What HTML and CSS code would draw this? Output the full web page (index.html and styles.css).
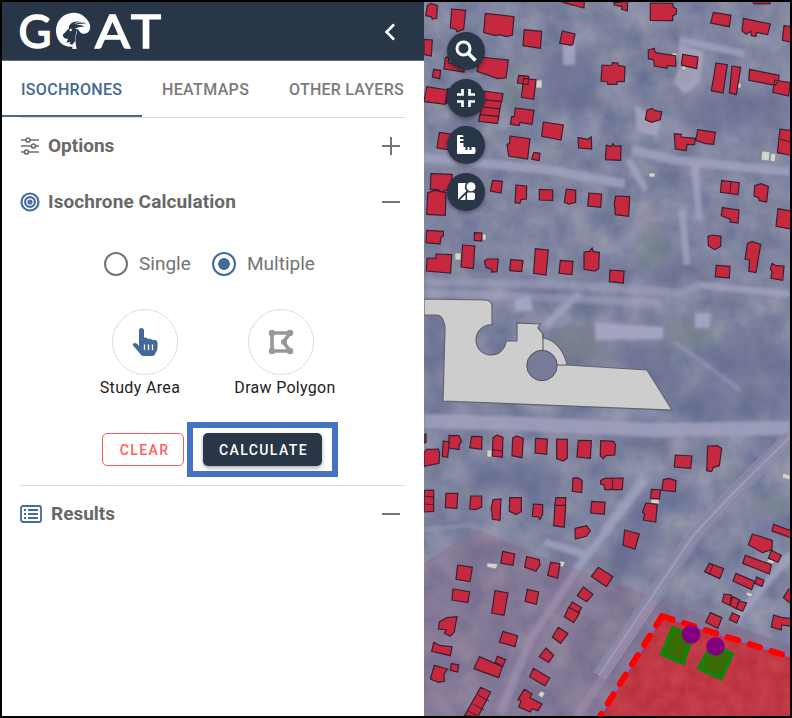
FILE: index.html
```html
<!DOCTYPE html>
<html lang="en">
<head>
<meta charset="utf-8">
<title>GOAT</title>
<link rel="stylesheet" href="styles.css">
</head>
<body>
<div class="app">
  <aside class="panel">
    <header class="header">
      <svg class="logo" width="160" height="58" viewBox="12 2 160 58" role="img" aria-label="GOAT">
        <g class="logo-text"><text x="18.500" y="48.200" textLength="33" lengthAdjust="spacingAndGlyphs">G</text><text x="95" y="48.200" textLength="35" lengthAdjust="spacingAndGlyphs">A</text><text x="131" y="48.200" textLength="30" lengthAdjust="spacingAndGlyphs">T</text></g>
        <g transform="translate(50 8) scale(.33333)">
          <path fill="#fff" d="M70 14C91 13 107 26 117 43C131 70 103 87 90 72C85 64 81 60 76 63C81 66 82 71 79 79C75 91 76 108 80 122Q70 124 65 121L69 116C38 119 18 97 18 68C18 37 41 15 70 14Z"/>
          <path fill="#293647" d="M38 81L57 61Q55 53 62 47Q74 36 100 43L112 49Q90 44 77 51Q94 49 104 57Q90 54 76 61L80 67Q75 87 76 98L67 110L58 107L62 101L49 104L54 93L42 90Z"/>
          <path d="M74 46Q90 39 109 47" fill="none" stroke="#fff" stroke-width="2"/><circle cx="62" cy="66" r="3.500" fill="#fff"/>
        </g>
      </svg>
      <svg class="back" width="14" height="20" viewBox="0 0 14 20"><path d="M11 2.500L3.500 10L11 17.500" fill="none" stroke="#fff" stroke-width="2.500"/></svg>
    </header>
    <nav class="tabs"><span class="tab active">ISOCHRONES</span><span class="tab heat">HEATMAPS</span><span class="tab other">OTHER LAYERS</span></nav>
    <section class="section options">
      <svg width="20" height="20" viewBox="0 0 20 20" fill="#fff" stroke="#707070" stroke-width="1.700"><path d="M1 4H19M1 10H19M1 16H19"/><circle cx="8" cy="4" r="2"/><circle cx="13.500" cy="10" r="2"/><circle cx="6.500" cy="16" r="2"/></svg>
      <h2>Options</h2><span class="toggle plus"></span>
    </section>
    <section class="section calculation">
      <svg width="20" height="20" viewBox="0 0 20 20" fill="none" stroke="#446ba2" stroke-width="2.200"><circle cx="10" cy="10" r="8.500"/><circle cx="10" cy="10" r="4.900"/><circle cx="10" cy="10" r="1.500"/></svg>
      <h2 class="t-calc">Isochrone Calculation</h2><span class="toggle"></span>
    </section>
    <div class="radios"><i class="radio"></i><span class="t-single">Single</span><i class="radio selected"></i><span>Multiple</span></div>
    <div class="methods">
      <div class="method"><div class="circle">
        <svg class="hand" width="26" height="30" viewBox="0 0 26 30"><path fill="#446996" d="M7 16V3.500Q7 1 9.500 1T12 3.500V10.500Q15 10 16 12Q19 11 20 13Q25 12 25.500 16V21Q25 24 23.500 26Q23 29 20 29H11Q9 29 7.500 26L1 18.500Q.3 16 3 16Q5 16 7 19Z"/><path d="M12.500 17.500V23M16.500 17.500V23M20.500 17.500V23" stroke="#fff" stroke-width="1.300"/></svg>
      </div><span>Study Area</span></div>
      <div class="method wide"><div class="circle">
        <svg width="26" height="26" viewBox="0 0 26 26"><path d="M4 4H22L15.500 13L22 22H4Z" fill="none" stroke="#989898" stroke-width="3.600"/><g fill="#989898"><circle cx="4" cy="4" r="3.200"/><circle cx="22" cy="4" r="3.200"/><circle cx="16" cy="13" r="3"/><circle cx="22" cy="22" r="3.200"/><circle cx="4" cy="22" r="3.200"/></g></svg>
      </div><span>Draw Polygon</span></div>
    </div>
    <div class="actions"><button class="clear">CLEAR</button><div class="highlight"><button class="calculate">CALCULATE</button></div></div>
    <section class="section results">
      <svg width="22" height="18" viewBox="0 0 22 18" fill="none" stroke="#446ba2" stroke-width="1.800"><rect x="1" y="1" width="20" height="16" rx="2"/><path d="M8 5H18M8 9H18M8 13H18M4 5H6M4 9H6M4 13H6"/></svg>
      <h2>Results</h2><span class="toggle"></span>
    </section>
  </aside>
  <main class="map">
    <svg class="canvas" width="366" height="714" viewBox="424 2 366 714">
      <defs>
        <filter id="terrain" x="0" y="0" width="100%" height="100%" color-interpolation-filters="sRGB"><feTurbulence type="fractalNoise" baseFrequency=".035" numOctaves="5" seed="12"/><feColorMatrix values=".24 0 0 0 .38 .2 0 0 0 .42 .13 .05 0 0 .535 0 0 0 0 1"/></filter>
        <filter id="redgrain" x="0" y="0" width="100%" height="100%" color-interpolation-filters="sRGB"><feTurbulence type="fractalNoise" baseFrequency=".07" numOctaves="3" seed="4"/><feColorMatrix values=".1 0 0 0 .7 .1 0 0 0 .17 .1 0 0 0 .22 0 0 0 0 1"/></filter>
        <filter id="soft"><feGaussianBlur stdDeviation="1.500"/></filter>
        <filter id="wide"><feGaussianBlur stdDeviation="6"/></filter>
        <clipPath id="zone"><path d="M662 616L792 657V718H599Z"/></clipPath>
      </defs>
      <rect x="424" y="2" width="366" height="714" fill="#777b9b" filter="url(#terrain)"/>
      <g filter="url(#wide)" opacity=".45">
        <path fill="#62668e" d="M540 60L590 50L600 110L550 115ZM690 92L790 100V130L680 125ZM640 250L690 250L680 285L640 280ZM610 345L665 345L690 390L720 340H790V416H680L640 370H610ZM424 310H442V400H424ZM475 470H560V495H475ZM640 500L680 470L640 580L600 570Z"/>
        <path fill="#758481" d="M640 230H665V270H640ZM550 330H600V360H550ZM670 320H715V350H670ZM755 495H790V515H755ZM500 65H520V110H500Z"/>
      </g>
      <g filter="url(#soft)" opacity=".8">
        <g fill="none" stroke="#a2a2bf">
          <path stroke-width="9" d="M424 158L490 164L550 170L625 184M632 150L675 160L790 172"/><path stroke-width="7" d="M695 165L699 220M680 40L745 54M687 265L682 210M700 285L790 294"/>
          <path stroke-width="8" d="M424 282L550 284L680 293L700 285M424 292L660 303" opacity=".65"/>
          <path stroke-width="14" d="M424 421L530 424L650 430L790 428"/><path stroke-width="7" d="M545 326L580 293M628 160L646 190"/>
          <path stroke-width="8" d="M500 714L530 640L580 565L645 480M545 542L590 556M735 620L790 555"/>
          <path stroke-width="4" d="M602 530L642 475M424 530L470 525L500 540M675 342L740 390" opacity=".6"/>
        </g>
        <path fill="#aaa7c0" d="M679 44L704 52L700 82L685 94L674 83L679 65ZM635 105L660 120L658 136L637 132Z"/>
        <path fill="#aaaac8" d="M595 323L663 327V339L595 340ZM695 313H710V328H695ZM563 39H575V65H563ZM515 300L530 295L533 311H515Z"/>
        <path fill="#777d8c" d="M553 328L595 323L597 358L570 359L548 340Z" opacity=".7"/>
      </g>
      <path d="M477 528L540 556L790 645V716H424V563Z" fill="#906180" opacity=".3"/>
      <g fill="none"><path d="M792 436L735 492L695 535L599 676" stroke="#9190ac" stroke-width="15" opacity=".7"/><path d="M787 433L730 490L690 533L594 672M794 442L739 496L700 539L602 680" stroke="#747993" stroke-width="1" opacity=".7"/><path d="M790 437L733 493L693 536L599 675" stroke="#aaa9bd" stroke-width="1.500" opacity=".7"/><path d="M655 600L577 716" stroke="#a18aaa" stroke-width="8" opacity=".5"/></g>

      <path d="M424 299L486 300Q492 301 492 306V325A15 15 0 1 0 506 341H517V323L540 324L538 328L543 334V338C555 340 564 350 567 365L647 370L672 410L443 401L445 327Q443 315 437 315H424Z" fill="#cdcdcd" stroke="#62636a" stroke-width="1.200"/>
      <circle cx="542" cy="365.500" r="15.200" fill="#777b98" stroke="#4d4f63"/><path d="M543 334V350M567 365H557" stroke="#555" fill="none"/>

      <g fill="#d2d5cf" stroke="#7c8585" stroke-width=".7"><path d="M536 80H542V88H536ZM672 53H677V60H672ZM682 66H686V70H682ZM736 83H741V88H736ZM762 151L770 152L769 161L761 160ZM771 153L776 154L775 162L770 161ZM649 173H655V177H649ZM455 253H461V260H455ZM482 234H486V240H482ZM487 450H492V457H487ZM487 563L498 564L496 569L487 567ZM560 561L565 562L563 567L559 566ZM541 691L545 693L542 698L538 695ZM651 499H659V504H651ZM768 558L775 560L773 564L767 562ZM747 592L753 594L751 597L746 595ZM783 473L790 475V480L782 478Z"/></g>
      <g class="buildings">
        <g transform="translate(424 0) scale(.33333)"><path d="M10 17L20 10L40 16L38 54L25 57L22 50L5 47ZM83 27L125 31L119 88L99 95L95 87L79 84ZM184 40L270 50L265 105L245 110L229 104L215 107L179 98ZM301 89L353 94L349 145L297 137ZM415 93L453 102L447 132L440 136L407 130ZM411 6L481 2L480 24ZM0 118L25 120L22 168L0 164ZM64 173L74 170V189L122 199L120 216L60 207ZM29 208L50 211L47 236L25 231ZM168 171L253 180L246 234L221 236L159 214ZM284 226L314 229L312 254L280 249ZM299 235L336 239L329 298L292 292ZM8 260L70 270L64 313L0 305ZM71 266L95 271L92 313L67 309ZM181 273L237 281L233 305L177 299ZM177 299L232 304L228 326L172 321ZM172 321L228 327L224 349L168 344ZM168 344L225 350L220 371L164 364ZM274 324L330 331L324 373L288 367L285 377L259 373L263 349L271 350ZM358 366L418 375L411 420L353 409ZM462 413L492 418L502 411L503 447L464 444ZM46 397L95 404L87 451L39 444ZM258 408L318 416L311 477L254 468L249 433L257 430ZM329 457L348 460L345 482L323 477ZM21 521L85 523L81 566L52 576L43 569L19 569ZM34 571L66 578L64 646L8 643L11 578ZM206 541L235 544L231 579L199 573ZM276 555L308 558L307 597L291 599L288 610L273 608ZM346 568L386 570V601L346 600ZM427 567L455 571V607L436 612L421 606ZM495 579L533 582L530 622L491 618Z"/></g>
        <g transform="translate(602 0) scale(.33333)"><path d="M36 7L77 5L76 32L59 28L60 19L37 15ZM145 9L213 10V20L224 27L222 43L212 47V62L145 61ZM453 5H504V12L455 11ZM334 37L387 46L382 80L326 69ZM424 55L505 72L497 104L464 97L462 109L448 107L446 94L433 103L420 92ZM546 77L570 81V127L541 121ZM139 150L157 145L160 158L221 167V199L197 197L195 205L157 198L155 180L139 176ZM242 163L288 171L284 206L238 195ZM0 196L31 195V188L48 189V196L69 200L67 245H45V253H17V246L-3 243ZM342 189L376 194L363 279L328 272ZM390 198L416 202L403 284L382 279ZM443 208L531 226L530 242L520 256L440 241ZM518 240L565 248L560 288L512 277ZM135 331L150 325L160 332L179 335L175 359L148 367L130 359ZM217 401L238 403V411L279 415L278 434L255 433L253 452L220 447ZM287 389L340 397L335 433L310 431L281 421ZM13 435L28 440L32 431L40 439L57 437L56 481L10 479ZM534 387L570 392V467L526 458ZM359 541L412 548L408 584L355 577ZM458 557L477 551L499 559L494 606L472 602L471 594L456 588ZM41 588L83 590L80 649L40 644L37 609ZM361 623L411 630L408 669L384 666L386 658L358 647ZM528 626L570 634V688L522 679Z"/></g>
        <g transform="translate(424 210) scale(.33333)"><path d="M8 61L58 64V78L51 81L48 102L6 98ZM36 132L83 134L80 189L7 183L9 144L35 145ZM151 68L174 69L173 93L151 91ZM116 105L152 108L148 176L111 171ZM190 147L223 147L219 185L203 186V178L186 172L181 154ZM260 149L297 152L293 185L257 182ZM334 116L373 120L366 195L329 190ZM409 151L447 154L444 194L405 190ZM480 126L497 124L504 114L508 125L526 127L524 176L513 183L480 178Z"/></g>
        <g transform="translate(602 210) scale(.33333)"><path d="M318 79L331 75L357 79L356 109L338 119L319 108ZM437 99L450 95L476 103L462 188L440 184L443 150L429 148ZM343 166L384 169L382 204L340 200ZM24 180L66 183L64 219L22 215ZM510 160L522 167L546 168L542 211L507 205L510 185L505 177Z"/></g>
        <g transform="translate(424 420) scale(.33333)"><path d="M0 43L6 42V67L0 69ZM75 46L105 47L113 65L106 73L105 89L75 84ZM58 63L76 65L71 112L55 109ZM8 88L43 87L47 101L45 130L0 139V98ZM143 49L174 50L173 88L137 83ZM207 53L219 45L237 52L235 112L205 108ZM266 54L278 48L298 55L294 113L264 107ZM335 55L370 57L368 103L333 99ZM398 57L430 58V114L418 123L398 116ZM463 61L502 62L499 115L459 111ZM530 62L569 64L575 75L572 105L546 107L538 116L529 107ZM447 174L461 173L475 182L473 218L445 214ZM541 175L597 174L595 209H542L540 195L530 193V182ZM1 211L29 210V274L0 276ZM66 220L101 220L99 265L64 263ZM140 228L173 228V261L155 269L137 267ZM207 239L231 237L228 301L205 298L204 275L201 269ZM257 233L292 233V274L277 284L256 274ZM328 252L356 254V282L348 298L341 290L325 289ZM396 233H426L424 256H392ZM393 256H425L421 322L389 317ZM503 244L543 247L541 283L500 279ZM453 325L488 317L499 333L487 349L454 357ZM236 394L272 402L267 436L230 429ZM308 410L346 419L348 435L341 445L336 454L302 441ZM380 427L408 431L401 475L371 466ZM523 442L567 470L547 500L502 469ZM101 435L145 442L138 485L96 478ZM87 507L137 515L132 548L84 540ZM213 512L252 519L240 586L203 579ZM310 508L344 516L337 553L303 544ZM478 501L507 523L488 545L460 527ZM445 546L473 563L464 578L435 562ZM434 562L467 579L449 608L421 590ZM403 622L432 641L410 670L385 651ZM366 684L389 706L374 727L346 710ZM328 745L377 774L363 798L317 770ZM301 808L324 822L318 833L354 852L342 872L325 866L319 876L284 861L291 843L282 838ZM69 593L99 590L91 636L79 649L61 640L67 630L43 627L46 606ZM29 667L46 676L84 680L79 707L23 694ZM31 736L71 747L60 762L61 784L43 787L19 777ZM82 731L104 734L101 756L79 751ZM237 634L281 648L273 680L226 666ZM166 710L235 740L224 773L150 746ZM220 709L245 719L236 739L214 727ZM170 802L200 816L163 888H121Z"/></g>
        <g transform="translate(602 420) scale(.33333)"><path d="M220 105L270 108L266 145L217 141ZM317 78L345 77L359 85L352 137L334 142L329 155L314 152ZM184 179L201 175L222 182L220 215L180 211ZM148 208L176 210L172 237L146 235ZM132 249L166 253L161 306L124 300L128 282L121 276ZM68 330L112 342L99 387L63 376ZM515 313L570 333V354L510 333ZM451 342L511 361L510 389L481 398L439 374ZM508 391L538 406L528 427L499 415ZM430 406L508 434L502 462L422 430ZM322 430L365 446L353 476L308 455ZM402 460L458 484L449 509L393 483ZM464 471L486 481L480 499L459 490ZM366 522L388 525L384 556L361 546ZM392 530L413 540L402 566L384 556ZM411 543L434 549L422 574L402 566ZM391 578L413 589L404 609L382 599ZM325 578L360 593L347 625L311 607ZM560 508L570 506V553L544 533ZM515 585L538 592L570 596V619L539 615L538 630L508 621Z"/></g>
        <path d="M780 139L790 142M493 450L503 451M424 496L434 497M424 504L434 505M613 478L612 490M713 565L709 575M478 695L489 701M473 704L484 710M468 711L477 715M731 181L730 194"/>
      </g>
      <g clip-path="url(#zone)"><rect x="598" y="614" width="194" height="104" fill="#bc3846" filter="url(#redgrain)"/></g>
      <path d="M599 718L662 616L792 657" fill="none" stroke="#756dca" stroke-width="2"/>
      <path d="M662 616L600 716M662 616L790 657" fill="none" stroke="#fe0000" stroke-width="6" stroke-linecap="round" stroke-dasharray="11 12" stroke-dashoffset="0"/>
      <g fill="#3b6b04" stroke="#108309" stroke-width="4"><path d="M673 628L692 636L683 663L662 654ZM712 645L732 654L721 678L699 668Z"/></g>
      <g fill="#800080"><circle cx="691" cy="634.500" r="9.300"/><circle cx="715.500" cy="646.500" r="9.300"/></g>
    </svg>
    <div class="tools">
      <span class="tool"><svg viewBox="0 0 24 24" width="24" height="24" fill="none" stroke="#fff"><circle cx="9.500" cy="9.500" r="6.500" stroke-width="3"/><path d="M14.500 14.500L21.500 21.500" stroke-width="3.500"/></svg></span>
      <span class="tool"><svg viewBox="0 0 24 24" width="24" height="24" fill="none" stroke="#fff" stroke-width="2.700"><path d="M3 8.500H8.500V3M15.500 3V8.500H21M21 15.500H15.500V21M8.500 21V15.500H3"/></svg></span>
      <span class="tool"><svg viewBox="0 0 24 24" width="24" height="24"><path fill="#fff" d="M3 3Q3 2 4 2H8Q9.500 2 9.500 4H6V6H9.500V8H6V10H9.500V14H11.500V17H13.500V14H15.500V17H17.500V14H20Q21.500 14 21.500 16V19Q21.500 21 19.500 21H4Q3 21 3 20Z"/></svg></span>
      <span class="tool"><svg viewBox="0 0 24 24" width="24" height="24" fill="#fff"><path d="M4 4Q4 3 5 3H12Q9.500 8 12.500 11L4 19.500ZM14 12.500H19Q21 12.500 21 14.500V18Q21 20 19 20H14Q13 20 13 19V13.500Q13 12.500 14 12.500ZM11.500 14.500V20H6Z"/><circle cx="17" cy="6.800" r="4.500"/></svg></span>
    </div>
  </main>
</div>
</body>
</html>
```
FILE: styles.css
```css
* { box-sizing: border-box; }
body { margin: 0; font-family: Roboto, "Liberation Sans", sans-serif; background: #000; }
.app { width: 792px; height: 718px; display: flex; overflow: hidden; border: 2px solid #000; }
.panel { width: 422px; flex: none; background: #fff; }
.header { height: 59px; display: flex; justify-content: space-between; padding: 0 27px 0 10px; background: #293647; border-bottom: 1px solid #667180; }
.logo { flex: none; overflow: visible; }
.logo-text { font: 400 47px Lato, sans-serif; fill: #fff; stroke: #fff; stroke-width: 1.5px; }
.back { margin-top: 20px; }
.tabs { height: 56px; display: flex; position: relative; color: #7b7b7b; font-weight: 500; font-size: 16px; line-height: 57px; }
.tabs::after { content: ""; position: absolute; left: 18px; right: 19px; bottom: -1px; height: 1px; background: #dcdcdc; }
.tab { flex: none; white-space: nowrap; }
.active { width: 140px; padding-left: 19px; color: #446996; border-bottom: 2px solid #446996; letter-spacing: .3px; }
.heat { width: 127px; padding-left: 20px; letter-spacing: .35px; }
.other { padding-left: 20px; letter-spacing: .25px; }
.section { height: 56px; padding: 0 24px 0 18px; display: flex; align-items: center; color: #686868; }
.section h2 { font-size: 19px; font-weight: 700; line-height: 24px; margin: 0 0 0 8px; flex: 1; }
.section h2.t-calc { letter-spacing: .1px; }
.options { margin-top: 1px; }
.toggle { width: 18px; height: 18px; background: linear-gradient(#757575, #757575) center / 18px 2px no-repeat; }
.plus { background: linear-gradient(#757575, #757575) center / 18px 2px no-repeat, linear-gradient(#757575, #757575) center / 2px 18px no-repeat; }
.radios { height: 67px; padding-left: 102px; display: flex; align-items: center; font-size: 19px; color: #747474; }
.radio { width: 24px; height: 24px; border: 2.5px solid #747474; border-radius: 50%; margin-right: 11px; }
.t-single { width: 73px; }
.radio.selected { border-color: #446996; background: radial-gradient(circle, #446996 5.5px, transparent 6.2px); }
.methods { height: 111px; padding: 12px 0 0 76px; display: flex; font-size: 16px; color: #222; }
.method { width: 134px; display: flex; flex-direction: column; align-items: center; }
.method.wide { width: 138px; }
.circle { width: 66px; height: 66px; border: 1px solid #dedede; border-radius: 50%; display: flex; align-items: center; justify-content: center; margin-bottom: 4px; }
.method > span { line-height: 18px; letter-spacing: .35px; position: relative; left: -5px; }
.method.wide > span { left: 4px; letter-spacing: .3px; }
.actions { display: flex; height: 78px; width: 385px; margin-left: 18px; padding: 14px 0 0 82px; border-bottom: 1px solid #dedede; }
.results { margin-top: 0; }
.results h2 { margin-left: 9px; }
button { border: 0; border-radius: 5px; font: 500 14px/32px Roboto, sans-serif; letter-spacing: 1.4px; padding: 0; }
.clear { width: 82px; height: 33px; margin: 11px 3px 0 0; padding-left: 3px; color: #ff6060; background: #fff; border: 1px solid #ff5757; }
.highlight { width: 151px; height: 55px; border: 6px solid #4672c4; padding: 5px 10px; }
.calculate { width: 119px; height: 33px; padding-left: 2px; color: #fff; background: #293647; box-shadow: 0 2px 4px #0005; }
.map { flex: 1; min-width: 0; position: relative; }
.canvas { display: block; }
.buildings { fill: #c62840; stroke: #3c2030; stroke-width: 3.6; }
.buildings > path { stroke-width: 1; fill: none; }
.tools { position: absolute; left: 23px; top: 30px; display: flex; flex-direction: column; gap: 9px; }
.tool { width: 38px; height: 38px; display: flex; align-items: center; justify-content: center; background: #293647; border-radius: 50%; box-shadow: 0 2px 4px #0006; }
```
